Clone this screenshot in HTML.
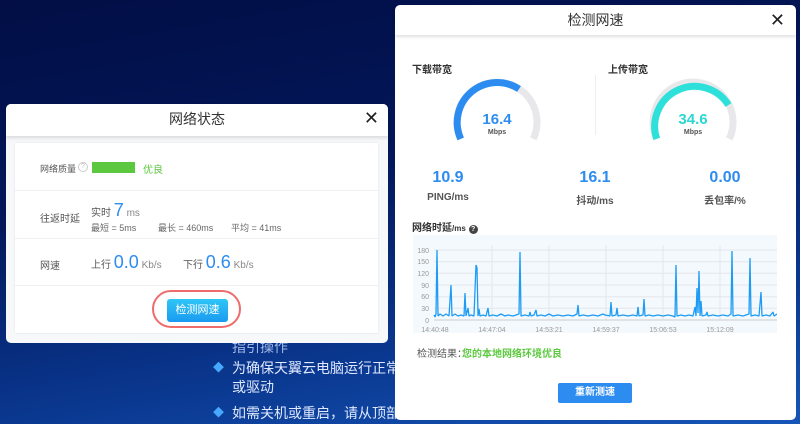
<!DOCTYPE html>
<html><head><meta charset="utf-8"><style>
*{margin:0;padding:0;box-sizing:border-box}
body{width:800px;height:424px;overflow:hidden;position:relative;font-family:"Liberation Sans","Noto Sans CJK SC",sans-serif;background:linear-gradient(170deg,#020e45 0%,#03175a 40%,#0a3890 75%,#1656b8 100%)}
.a{position:absolute;white-space:nowrap}
.dlg{position:absolute;background:#fff;border-radius:5px}
.hd{position:absolute;left:0;right:0;top:0;text-align:center;font-size:14px;color:#333;box-shadow:0 2px 3px rgba(0,0,0,.12)}
.x{position:absolute;font-size:18px;color:#222}
.bg{color:#dfe8ff;font-size:14px}
</style></head><body>
<div class="a bg" style="left:232px;top:337px;color:#9fb6e6">指引操作</div>
<div class="a bg" style="left:213px;top:359px;color:#47a8ff;font-size:11px">◆</div>
<div class="a bg" style="left:232px;top:358px">为确保天翼云电脑运行正常，请</div>
<div class="a bg" style="left:232px;top:377px">或驱动</div>
<div class="a bg" style="left:213px;top:404px;color:#47a8ff;font-size:11px">◆</div>
<div class="a bg" style="left:232px;top:403px">如需关机或重启，请从顶部工具</div>

<!-- left dialog -->
<div class="dlg" style="left:6px;top:104px;width:382px;height:239px;background:#f7f8fa">
  <div class="hd" style="height:32px;line-height:30px;background:#fff;border-radius:5px 5px 0 0">网络状态</div>
  <div class="x" style="right:9px;top:4px">✕</div>
  <div style="position:absolute;left:9px;top:39px;width:363px;height:190px;background:#fff;box-shadow:0 0 2px rgba(0,0,0,.1)">
    <div class="a" style="left:25px;top:19px;font-size:9px;color:#555">网络质量</div>
    <div class="a" style="left:63px;top:19px;width:10px;height:10px;border:1px solid #ccc;border-radius:50%;font-size:7px;color:#bbb;text-align:center;line-height:8px">?</div>
    <div class="a" style="left:77px;top:19px;width:43px;height:11px;background:#5cc83f"></div>
    <div class="a" style="left:128px;top:18px;font-size:10px;color:#5cc83f">优良</div>
    <div class="a" style="left:0;right:0;top:47px;border-top:1px solid #f0f0f0"></div>
    <div class="a" style="left:25px;top:67px;font-size:10px;color:#555">往返时延</div>
    <div class="a" style="left:76px;top:57px;font-size:10px;color:#555">实时 <span style="font-size:18px;color:#2d8cf0">7</span> <span style="color:#888">ms</span></div>
    <div class="a" style="left:76px;top:78px;font-size:9px;color:#666">最短 = 5ms</div>
    <div class="a" style="left:143px;top:78px;font-size:9px;color:#666">最长 = 460ms</div>
    <div class="a" style="left:216px;top:78px;font-size:9px;color:#666">平均 = 41ms</div>
    <div class="a" style="left:0;right:0;top:95px;border-top:1px solid #f0f0f0"></div>
    <div class="a" style="left:25px;top:114px;font-size:10px;color:#555">网速</div>
    <div class="a" style="left:76px;top:109px;font-size:10px;color:#555">上行 <span style="font-size:18px;color:#2d8cf0">0.0</span> <span style="color:#888">Kb/s</span></div>
    <div class="a" style="left:168px;top:109px;font-size:10px;color:#555">下行 <span style="font-size:18px;color:#2d8cf0">0.6</span> <span style="color:#888">Kb/s</span></div>
    <div class="a" style="left:0;right:0;top:142px;border-top:1px solid #f0f0f0"></div>
    <div class="a" style="left:137px;top:147px;width:89px;height:38px;border:2px solid #ef6c6c;border-radius:19px"></div>
    <div class="a" style="left:152px;top:156px;width:61px;height:23px;border-radius:3px;background:linear-gradient(#2ec6f6,#1a9af0);color:#fff;font-size:11px;text-align:center;line-height:23px">检测网速</div>
  </div>
</div>

<!-- right dialog -->
<div class="dlg" style="left:395px;top:5px;width:401px;height:415px">
  <div class="hd" style="height:30px;line-height:30px">检测网速</div>
  <div class="x" style="right:11px;top:5px">✕</div>
  <div class="a" style="left:17px;top:56px;font-size:10px;font-weight:bold;color:#333">下载带宽</div>
  <div class="a" style="left:213px;top:56px;font-size:10px;font-weight:bold;color:#333">上传带宽</div>
  <div class="a" style="left:200px;top:70px;height:60px;border-left:1px solid #eee"></div>
  <svg class="a" style="left:0;top:0" width="401" height="160">
    <g fill="none" stroke-width="7">
      <path d="M65.7,133.9 A40,40 0 1 1 138.3,133.9" stroke="#e8e8ea"/>
      <path d="M65.7,133.9 A40,40 0 0 1 124,84" stroke="#2d8cf0"/>
      <path d="M261.7,133.9 A40,40 0 1 1 334.3,133.9" stroke="#e8e8ea"/>
      <path d="M261.7,133.9 A40,40 0 0 1 333.5,100" stroke="#2ee0da"/>
    </g>
  </svg>
  <div class="a" style="left:72px;top:106px;width:60px;text-align:center;font-size:15px;font-weight:bold;color:#2d8cf0">16.4</div>
  <div class="a" style="left:72px;top:124px;width:60px;text-align:center;font-size:7px;font-weight:bold;color:#555">Mbps</div>
  <div class="a" style="left:268px;top:106px;width:60px;text-align:center;font-size:15px;font-weight:bold;color:#2ad7d3">34.6</div>
  <div class="a" style="left:268px;top:124px;width:60px;text-align:center;font-size:7px;font-weight:bold;color:#555">Mbps</div>
  <div class="a" style="left:23px;top:164px;width:60px;text-align:center;font-size:16px;font-weight:bold;color:#2d8cf0">10.9</div>
  <div class="a" style="left:23px;top:187px;width:60px;text-align:center;font-size:10px;font-weight:bold;color:#555">PING/ms</div>
  <div class="a" style="left:170px;top:164px;width:60px;text-align:center;font-size:16px;font-weight:bold;color:#2d8cf0">16.1</div>
  <div class="a" style="left:170px;top:187px;width:60px;text-align:center;font-size:10px;font-weight:bold;color:#555">抖动/ms</div>
  <div class="a" style="left:300px;top:164px;width:60px;text-align:center;font-size:16px;font-weight:bold;color:#2d8cf0">0.00</div>
  <div class="a" style="left:300px;top:187px;width:60px;text-align:center;font-size:10px;font-weight:bold;color:#555">丢包率/%</div>
  <div class="a" style="left:17px;top:214px;font-size:10px;font-weight:bold;color:#333">网络时延<span style="font-size:8px">/ms</span> <span style="display:inline-block;width:9px;height:9px;border-radius:50%;background:#444;color:#fff;font-size:7px;text-align:center;line-height:9px">?</span></div>
  <svg class="a" style="left:18px;top:230px" width="364" height="98">
    <rect width="364" height="98" fill="#f4f9fd"/>
    <g stroke="#e3e7ec" stroke-width="1">
      <line x1="21" y1="15" x2="364" y2="15"/><line x1="21" y1="26.7" x2="364" y2="26.7"/><line x1="21" y1="38.3" x2="364" y2="38.3"/><line x1="21" y1="50" x2="364" y2="50"/><line x1="21" y1="61.7" x2="364" y2="61.7"/><line x1="21" y1="73.3" x2="364" y2="73.3"/>
      <line x1="79" y1="10" x2="79" y2="85"/><line x1="136" y1="10" x2="136" y2="85"/><line x1="193" y1="10" x2="193" y2="85"/><line x1="250" y1="10" x2="250" y2="85"/><line x1="307" y1="10" x2="307" y2="85"/>
    </g>
    <line x1="21" y1="85" x2="364" y2="85" stroke="#ccc"/>
    <g font-size="7" fill="#999" text-anchor="end" font-family="Liberation Sans">
      <text x="16" y="18">180</text><text x="16" y="29">150</text><text x="16" y="41">120</text><text x="16" y="53">90</text><text x="16" y="64">60</text><text x="16" y="76">30</text><text x="16" y="88">0</text>
    </g>
    <g font-size="7" fill="#999" text-anchor="middle" font-family="Liberation Sans">
      <text x="22" y="97">14:40:48</text><text x="79" y="97">14:47:04</text><text x="136" y="97">14:53:21</text><text x="193" y="97">14:59:37</text><text x="250" y="97">15:06:53</text><text x="307" y="97">15:12:09</text>
    </g>
    <path fill="none" stroke="#1e9cf5" stroke-width="1.3" stroke-linejoin="bevel" d="M21,80 L22,82 L23,79 L24,15 L25,81 L27,79 L30,81 L33,79 L36,81 L38,50 L39,81 L42,79 L45,81 L48,80 L51,81 L52,58 L53,81 L55,73 L56,81 L58,80 L61,81 L63,30 L64,33 L65,81 L66,74 L67,81 L70,80 L73,81 L75,73 L76,81 L80,80 L84,81 L88,79 L92,81 L95,80 L100,81 L106,79 L107,17 L108,81 L112,80 L116,81 L117,77 L118,81 L121,80 L123,75 L124,81 L128,80 L132,81 L136,79 L140,81 L145,80 L150,81 L155,80 L160,81 L164,79 L165,70 L166,81 L170,80 L175,81 L180,80 L185,81 L190,79 L192,80 L197,81 L198,67 L199,81 L203,80 L204,73 L205,81 L210,80 L215,81 L220,80 L224,81 L225,72 L226,81 L230,80 L231,64 L232,81 L236,80 L240,81 L245,80 L250,81 L255,80 L260,81 L262,82 L263,30 L264,81 L268,80 L272,81 L276,80 L280,81 L282,72 L283,81 L284,53 L285,78 L286,36 L287,81 L288,66 L289,81 L293,80 L294,77 L295,81 L300,80 L305,81 L310,80 L315,81 L318,79 L319,16 L320,81 L325,80 L330,81 L336,79 L337,23 L338,81 L342,80 L346,81 L348,57 L349,81 L353,80 L357,81 L360,77 L361,81 L364,79"/>
  </svg>
  <div class="a" style="left:22px;top:340px;font-size:10px;color:#555">检测结果：</div>
  <div class="a" style="left:67px;top:340px;font-size:10px;font-weight:bold;color:#5cc83f">您的本地网络环境优良</div>
  <div class="a" style="left:163px;top:378px;width:74px;height:20px;border-radius:2px;background:#2d8cf0;color:#fff;font-size:10px;font-weight:bold;text-align:center;line-height:20px">重新测速</div>
</div>
</body></html>
